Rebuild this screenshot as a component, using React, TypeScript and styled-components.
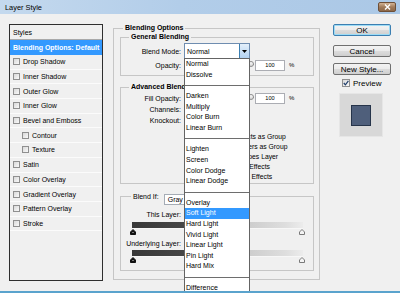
import React from 'react';
import styled, { createGlobalStyle, css } from 'styled-components';

const GlobalStyle = createGlobalStyle`
  html, body { margin: 0; padding: 0; background: #f0f0f0; }
  body {
    font-family: "Liberation Sans", Arial, sans-serif;
    font-size: 7px;
    color: #000;
  }
  * { box-sizing: border-box; }
`;

const Window = styled.div`
  width: 400px;
  height: 293px;
  overflow: hidden;
  display: flex;
  flex-direction: column;
  background: #f0f0f0;
  border-bottom: 2px solid #5aa3cd;
`;

const TitleBar = styled.div`
  height: 14px;
  flex: none;
  display: flex;
  align-items: center;
  justify-content: space-between;
  padding-left: 5px;
  background: linear-gradient(to right, #c4d9ee, #b2cde9 45%, #abc8e6);
  font-size: 7.4px;
`;

const CloseButton = styled.div`
  width: 18px;
  height: 10px;
  margin-right: 4px;
  border-radius: 2px;
  border: 1px solid #6d4f37;
  background: linear-gradient(#d2b394, #a07b5b 50%, #8d6848);
  display: flex;
  align-items: center;
  justify-content: center;
`;

const Body = styled.div`
  flex: 1;
  display: flex;
  align-items: flex-start;
  padding-top: 10px;
`;

/* ---------- left styles list ---------- */

const StylesPanel = styled.div`
  margin-left: 9px;
  width: 94px;
  height: 257px;
  border: 1px solid #2f2f2f;
  display: flex;
  flex-direction: column;
`;

const PanelHeader = styled.div`
  height: 15px;
  padding-left: 3px;
  display: flex;
  align-items: center;
  border-bottom: 1px solid #a9a9a9;
`;

const SelectedRow = styled.div`
  height: 15px;
  padding-left: 3px;
  display: flex;
  align-items: center;
  background: #3399ff;
  color: #fff;
  font-weight: bold;
`;

const StyleRow = styled.div<{ $indent?: boolean }>`
  height: 14.7px;
  display: flex;
  align-items: center;
  gap: 3px;
  padding-left: ${p => (p.$indent ? 12 : 3)}px;
  border-bottom: 1px solid #fbfbfb;
`;

const Box = styled.span<{ $size?: number }>`
  flex: none;
  width: ${p => p.$size ?? 7}px;
  height: ${p => p.$size ?? 7}px;
  border: 1px solid #8f8f8f;
  background: linear-gradient(135deg, #d9d9d9, #f9f9f9);
  display: inline-flex;
  align-items: center;
  justify-content: center;
`;

/* ---------- groups ---------- */

const Group = styled.fieldset<{ $top?: number }>`
  margin: ${p => p.$top ?? 0}px 0 0 0;
  padding: 0;
  min-width: 0;
  border: 1px solid #c6c6c6;
`;

const OuterGroup = styled(Group)`
  margin-left: 10px;
  width: 207px;
  padding: 0 5px 8px 6px;
`;

const Legend = styled.legend<{ $offset: number }>`
  height: 8px;
  line-height: 8px;
  padding: 0 2px;
  margin-left: ${p => p.$offset}px;
  font-weight: bold;
  white-space: nowrap;
`;

const BlendIfLegend = styled.legend`
  height: 8px;
  line-height: 8px;
  padding: 0 2px;
  margin-left: 10px;
  display: flex;
  align-items: flex-start;
  overflow: visible;
  white-space: nowrap;
`;

const Row = styled.div<{ $h: number; $top?: number }>`
  height: ${p => p.$h}px;
  margin-top: ${p => p.$top ?? 0}px;
  display: flex;
  align-items: center;
`;

const Spacer = styled.div<{ $h: number }>`
  height: ${p => p.$h}px;
`;

const Label = styled.span`
  width: 60px;
  flex: none;
  text-align: right;
  white-space: nowrap;
  margin-right: 3px;
`;

const SelectWrap = styled.div`
  position: relative;
  width: 66px;
  height: 16px;
  border: 1px solid #6f8db0;
  background: #fff;
  display: flex;
  align-items: center;
  padding-left: 2px;
`;

const SelectButton = styled.span`
  position: absolute;
  right: 0;
  top: 0;
  bottom: 0;
  width: 10px;
  border-left: 1px solid #3c7fb1;
  background: linear-gradient(#e3effa, #b3d2f1);
  display: flex;
  align-items: center;
  justify-content: center;
`;

const SmallSelect = styled.div<{ $w: number; $left?: number }>`
  width: ${p => p.$w}px;
  height: 11px;
  margin-left: ${p => p.$left ?? 0}px;
  border: 1px solid #a5acb5;
  background: #fff;
  display: flex;
  align-items: center;
  padding-left: 3px;
`;

const Slider = styled.div`
  position: relative;
  width: 70px;
  height: 6px;
  border-top: 1px solid #9a9a9a;
  margin-top: 3px;
`;

const SliderThumb = styled.span`
  position: absolute;
  right: 0;
  top: -4px;
  width: 6px;
  height: 6px;
  border-radius: 50%;
  border: 1px solid #8c8c8c;
  background: linear-gradient(#fdfdfd, #d4d4d4);
`;

const NumberInput = styled.div`
  width: 30px;
  height: 11px;
  margin-left: 1px;
  border: 1px solid #abadb3;
  background: #fff;
  font-size: 5.6px;
  display: flex;
  align-items: center;
  justify-content: center;
`;

const Percent = styled.span`
  margin-left: 4px;
  font-size: 6px;
`;

const CheckRow = styled.div`
  height: 10px;
  margin-left: 63px;
  display: flex;
  align-items: center;
  gap: 2px;
  font-size: 6.8px;
  white-space: nowrap;
`;

const ChannelBoxes = styled.div`
  display: flex;
  gap: 10px;
`;

const Bar = styled.div<{ $top: number }>`
  width: 171px;
  height: 7px;
  margin: ${p => p.$top}px 0 0 11px;
  background: linear-gradient(to right, #383838 0%, #474747 32%, #cdcdcd 68%, #dedede 90%, #ececec 100%);
  border-bottom: 1px solid #f7f7f7;
`;

const ThumbRow = styled.div`
  width: 175px;
  height: 6px;
  margin-left: 9px;
  display: flex;
  justify-content: space-between;
`;

/* ---------- dropdown menu ---------- */

const Menu = styled.div`
  position: absolute;
  top: 100%;
  left: -1px;
  width: 66px;
  border: 1px solid #646464;
  background: #fff;
  z-index: 10;
`;

const MenuItem = styled.div<{ $active?: boolean }>`
  height: 10.667px;
  line-height: 10.667px;
  padding-left: 1px;
  white-space: nowrap;
  ${p =>
    p.$active &&
    css`
      background: #3399ff;
      color: #fff;
    `}
`;

const MenuSeparator = styled.div`
  height: 10.667px;
  display: flex;
  align-items: center;
  &::after {
    content: "";
    flex: 1;
    height: 1px;
    background: #6e6e6e;
  }
`;

/* ---------- right column ---------- */

const SideColumn = styled.div`
  margin-left: 13px;
  width: 58px;
  display: flex;
  flex-direction: column;
  font-size: 8px;
`;

const Button = styled.div<{ $default?: boolean; $top?: number }>`
  height: 12px;
  margin-top: ${p => p.$top ?? 0}px;
  border-radius: 2px;
  border: 1px solid ${p => (p.$default ? '#3c7fb1' : '#707070')};
  background: linear-gradient(#f3f3f3, #ebebeb 48%, #dcdcdc 52%, #cfcfcf);
  display: flex;
  align-items: center;
  justify-content: center;
  white-space: nowrap;
  ${p =>
    p.$default &&
    css`
      box-shadow: inset 0 0 0 1px #9ddcf6;
    `}
`;

const PreviewRow = styled.div`
  height: 10px;
  margin-top: 3px;
  padding-left: 9px;
  display: flex;
  align-items: center;
  gap: 3px;
`;

const Swatch = styled.div`
  width: 44px;
  height: 44px;
  margin: 5px 0 0 6px;
  background: #d8d8d8;
  border: 1px solid #e6e6e6;
  display: flex;
  align-items: center;
  justify-content: center;
`;

const SwatchColor = styled.div`
  width: 20px;
  height: 21px;
  background: #4f5f7b;
  border: 1px solid #26344a;
`;

const blendModes = [
  'Normal', 'Dissolve', '-',
  'Darken', 'Multiply', 'Color Burn', 'Linear Burn', '-',
  'Lighten', 'Screen', 'Color Dodge', 'Linear Dodge', '-',
  'Overlay', 'Soft Light', 'Hard Light', 'Vivid Light', 'Linear Light', 'Pin Light', 'Hard Mix', '-',
  'Difference',
];

const styleItems: { name: string; indent?: boolean }[] = [
  { name: 'Drop Shadow' },
  { name: 'Inner Shadow' },
  { name: 'Outer Glow' },
  { name: 'Inner Glow' },
  { name: 'Bevel and Emboss' },
  { name: 'Contour', indent: true },
  { name: 'Texture', indent: true },
  { name: 'Satin' },
  { name: 'Color Overlay' },
  { name: 'Gradient Overlay' },
  { name: 'Pattern Overlay' },
  { name: 'Stroke' },
];

const advancedChecks = [
  'Blend Interior Effects as Group',
  'Blend Clipped Layers as Group',
  'Transparency Shapes Layer',
  'Layer Mask Hides Effects',
  'Vector Mask Hides Effects',
];

const Thumb = ({ dark }: { dark?: boolean }) => (
  <svg width="6" height="6" viewBox="0 0 6 6">
    <path
      d="M3 0.5 L5.5 3 L5.5 5.5 L0.5 5.5 L0.5 3 Z"
      fill={dark ? '#111' : '#f4f4f4'}
      stroke={dark ? '#111' : '#7a7a7a'}
      strokeWidth="1"
    />
    {dark && <rect x="2.5" y="3" width="1" height="1" fill="#ddd" />}
  </svg>
);

const Slide = () => (
  <Slider>
    <SliderThumb />
  </Slider>
);

const App = () => (
  <>
    <GlobalStyle />
    <Window>
      <TitleBar>
        <span>Layer Style</span>
        <CloseButton>
          <svg width="7" height="6" viewBox="0 0 7 6">
            <path d="M1 0.5 L6 5.5 M6 0.5 L1 5.5" stroke="#fff" strokeWidth="1.4" />
          </svg>
        </CloseButton>
      </TitleBar>

      <Body>
        <StylesPanel>
          <PanelHeader>Styles</PanelHeader>
          <SelectedRow>Blending Options: Default</SelectedRow>
          {styleItems.map(item => (
            <StyleRow key={item.name} $indent={item.indent}>
              <Box />
              <span>{item.name}</span>
            </StyleRow>
          ))}
        </StylesPanel>

        <OuterGroup>
          <Legend $offset={3}>Blending Options</Legend>

          <Group $top={1}>
            <Legend $offset={8}>General Blending</Legend>
            <Row $h={16} $top={2}>
              <Label>Blend Mode:</Label>
              <SelectWrap>
                Normal
                <SelectButton>
                  <svg width="5" height="3" viewBox="0 0 5 3">
                    <path d="M0 0 L5 0 L2.5 3 Z" fill="#000" />
                  </svg>
                </SelectButton>
                <Menu>
                  {blendModes.map((mode, i) =>
                    mode === '-' ? (
                      <MenuSeparator key={i} />
                    ) : (
                      <MenuItem key={i} $active={mode === 'Soft Light'}>
                        {mode}
                      </MenuItem>
                    ),
                  )}
                </Menu>
              </SelectWrap>
            </Row>
            <Row $h={12}>
              <Label>Opacity:</Label>
              <Slide />
              <NumberInput>100</NumberInput>
              <Percent>%</Percent>
            </Row>
            <Spacer $h={4} />
          </Group>

          <Group $top={7}>
            <Legend $offset={8}>Advanced Blending</Legend>
            <Row $h={12} $top={1}>
              <Label>Fill Opacity:</Label>
              <Slide />
              <NumberInput>100</NumberInput>
              <Percent>%</Percent>
            </Row>
            <Row $h={11}>
              <Label>Channels:</Label>
              <ChannelBoxes>
                <Box />
                <Box />
                <Box />
              </ChannelBoxes>
            </Row>
            <Row $h={11}>
              <Label>Knockout:</Label>
              <SmallSelect $w={50} />
            </Row>
            <Spacer $h={5} />
            {advancedChecks.map(text => (
              <CheckRow key={text}>
                <Box />
                <span>{text}</span>
              </CheckRow>
            ))}
            <Spacer $h={2} />
          </Group>

          <Group $top={8}>
            <BlendIfLegend>
              <span style={{ marginTop: 1 }}>Blend If:</span>
              <SmallSelect $w={64} $left={5} style={{ marginTop: 2 }}>
                Gray
              </SmallSelect>
            </BlendIfLegend>
            <Row $h={10} $top={9}>
              <Label>This Layer:</Label>
            </Row>
            <Bar $top={3} />
            <ThumbRow>
              <Thumb dark />
              <Thumb />
            </ThumbRow>
            <Row $h={10} $top={3}>
              <Label>Underlying Layer:</Label>
            </Row>
            <Bar $top={2} />
            <ThumbRow>
              <Thumb dark />
              <Thumb />
            </ThumbRow>
            <Spacer $h={7} />
          </Group>
        </OuterGroup>

        <SideColumn>
          <Button $default>OK</Button>
          <Button $top={9}>Cancel</Button>
          <Button $top={6}>New Style...</Button>
          <PreviewRow>
            <Box $size={8}>
              <svg width="6" height="6" viewBox="0 0 6 6">
                <path d="M0.8 3 L2.4 4.8 L5.4 0.8" fill="none" stroke="#1f3e6b" strokeWidth="1.2" />
              </svg>
            </Box>
            <span>Preview</span>
          </PreviewRow>
          <Swatch>
            <SwatchColor />
          </Swatch>
        </SideColumn>
      </Body>
    </Window>
  </>
);

export default App;
